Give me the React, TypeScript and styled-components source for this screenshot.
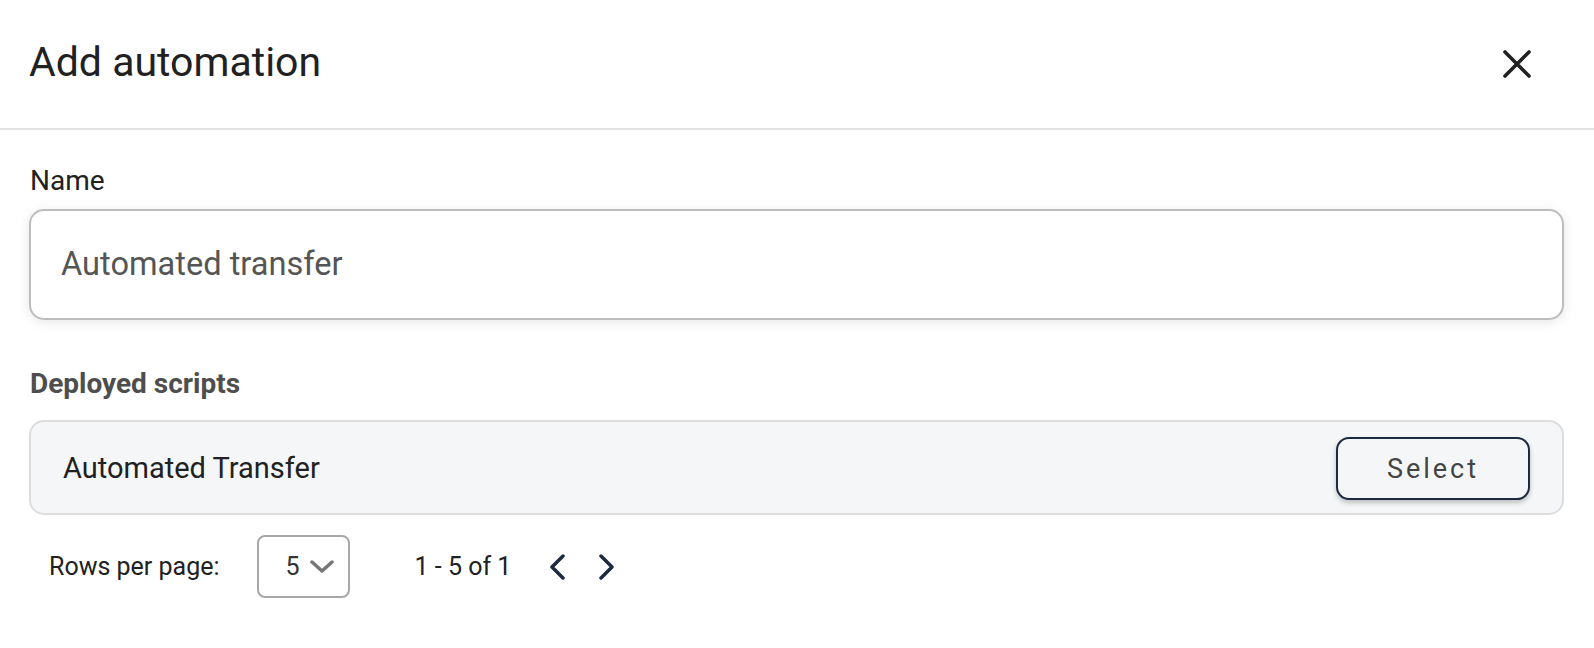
import React from 'react';
import styled, { createGlobalStyle } from 'styled-components';

const GlobalStyle = createGlobalStyle`
  html, body {
    margin: 0;
    padding: 0;
    background: #ffffff;
    font-family: Roboto, "Liberation Sans", Arial, sans-serif;
    color: #212121;
  }
`;

const Dialog = styled.div`
  width: 1594px;
  height: 648px;
  background: #fff;
  display: flex;
  flex-direction: column;
`;

const Header = styled.header`
  height: 130px;
  border-bottom: 2px solid #e2e2e2;
  display: flex;
  align-items: center;
  justify-content: space-between;
  padding: 0 63px 2px 29px;
  box-sizing: border-box;
`;

const Title = styled.h2`
  margin: 0;
  font-size: 41px;
  font-weight: 400;
  line-height: 1.2;
  color: #212121;
`;

const IconButton = styled.button`
  border: 0;
  background: transparent;
  padding: 0;
  width: 28px;
  height: 28px;
  display: flex;
  align-items: center;
  justify-content: center;
  cursor: pointer;
  margin-top: 1px;
`;

const Body = styled.div`
  padding: 34px 30px 0 29px;
  display: flex;
  flex-direction: column;
`;

const Label = styled.label<{ $bold?: boolean }>`
  font-size: 28px;
  line-height: 1.2;
  font-weight: ${p => (p.$bold ? 700 : 400)};
  color: ${p => (p.$bold ? '#4e4e4e' : '#212121')};
  margin-bottom: ${p => (p.$bold ? '19px' : '11px')};
  padding-left: 1px;
`;

const TextInput = styled.input`
  height: 111px;
  box-sizing: border-box;
  border: 2px solid #bdbdbd;
  border-radius: 15px;
  padding: 0 30px;
  font-family: inherit;
  font-size: 32.6px;
  color: #555;
  background: #fff;
  box-shadow: 0 2px 12px rgba(0, 0, 0, 0.1);
  outline: none;
  margin-bottom: 47px;
`;

const List = styled.div`
  border: 2px solid #dddddd;
  border-radius: 15px;
  background: #f5f6f8;
  margin-top: 1px;
`;

const Row = styled.div`
  height: 91px;
  display: flex;
  align-items: center;
  justify-content: space-between;
  padding: 0 32px;
`;

const RowName = styled.span`
  font-size: 29px;
  color: #212121;
`;

const SelectButton = styled.button`
  width: 194px;
  height: 63px;
  box-sizing: border-box;
  border: 2px solid #1c2b3f;
  border-radius: 13px;
  background: #f5f6f8;
  font-family: inherit;
  font-size: 27px;
  letter-spacing: 3px;
  color: #444;
  box-shadow: 0 3px 5px rgba(0, 0, 0, 0.22);
  cursor: pointer;
  margin-top: 2px;
`;

const Pagination = styled.div`
  display: flex;
  align-items: center;
  padding: 20px 0 0 20px;
`;

const PageText = styled.span<{ $gap: number }>`
  font-size: 25px;
  color: #212121;
  margin-right: ${p => p.$gap}px;
`;

const RowsSelect = styled.div`
  width: 93px;
  height: 63px;
  box-sizing: border-box;
  border: 2px solid #a8a8a8;
  border-radius: 8px;
  display: flex;
  align-items: center;
  padding-left: 27px;
  gap: 10px;
  margin-right: 65px;
  font-size: 25px;
  color: #333;
`;

const NavButton = styled.button`
  border: 0;
  background: transparent;
  padding: 0;
  width: 17px;
  height: 26px;
  display: flex;
  margin-right: 32px;
  cursor: pointer;
`;

const PrevButton = styled(NavButton)`
  margin-left: -1px;
`;

export default function App() {
  return (
    <>
      <GlobalStyle />
      <Dialog>
        <Header>
          <Title>Add automation</Title>
          <IconButton aria-label="close">
            <svg width="28" height="28" viewBox="0 0 28 28">
              <path d="M2 2 L26 26 M26 2 L2 26" stroke="#212121" strokeWidth="3.6" strokeLinecap="round" />
            </svg>
          </IconButton>
        </Header>
        <Body>
          <Label>Name</Label>
          <TextInput defaultValue="Automated transfer" />
          <Label $bold>Deployed scripts</Label>
          <List>
            <Row>
              <RowName>Automated Transfer</RowName>
              <SelectButton>Select</SelectButton>
            </Row>
          </List>
          <Pagination>
            <PageText $gap={37}>Rows per page:</PageText>
            <RowsSelect>
              <span>5</span>
              <svg width="24" height="13" viewBox="0 0 24 13">
                <path d="M2 2 L12 11 L22 2" fill="none" stroke="#777" strokeWidth="3.5" strokeLinecap="round" strokeLinejoin="round" />
              </svg>
            </RowsSelect>
            <PageText $gap={39}>1 - 5 of 1</PageText>
            <PrevButton aria-label="previous page">
              <svg width="17" height="26" viewBox="0 0 17 26">
                <path d="M14 2 L3 13 L14 24" fill="none" stroke="#1c2b3f" strokeWidth="3.5" strokeLinecap="round" strokeLinejoin="round" />
              </svg>
            </PrevButton>
            <NavButton aria-label="next page">
              <svg width="17" height="26" viewBox="0 0 17 26">
                <path d="M3 2 L14 13 L3 24" fill="none" stroke="#1c2b3f" strokeWidth="3.5" strokeLinecap="round" strokeLinejoin="round" />
              </svg>
            </NavButton>
          </Pagination>
        </Body>
      </Dialog>
    </>
  );
}
